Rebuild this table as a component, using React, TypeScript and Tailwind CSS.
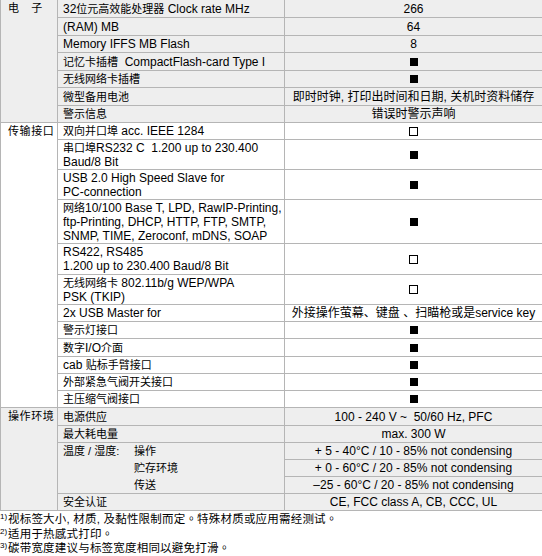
import React from "react";

const CJK_RE = /([\u2E80-\u9FFF\u3000-\u303F\uFF00-\uFFEF]+)/;

function Mix({ text, cjk }: { text: string; cjk: string }) {
  const parts = text.split(CJK_RE);
  return (
    <>
      {parts.map((p, i) =>
        i % 2 === 1 ? (
          <span key={i} className={cjk}>
            {p}
          </span>
        ) : (
          <span key={i}>{p}</span>
        )
      )}
    </>
  );
}

const Filled = () => <span className="inline-block w-[8px] h-[8px] bg-black" />;
const Empty = () => <span className="inline-block w-[9px] h-[9px] border border-black bg-white" />;

type Row = { h: string; mid: string[]; right: React.ReactNode };

const MIDCJK = "text-[11px]";
const RCJK = "text-[12px]";

function RightText({ t }: { t: string }) {
  return (
    <span className="whitespace-pre">
      <Mix text={t} cjk={RCJK} />
    </span>
  );
}

const sec1: Row[] = [
  { h: "h-[18px]", mid: ["32位元高效能处理器 Clock rate MHz"], right: <RightText t="266" /> },
  { h: "h-[18px]", mid: ["(RAM) MB"], right: <RightText t="64" /> },
  { h: "h-[17px]", mid: ["Memory IFFS MB Flash"], right: <RightText t="8" /> },
  { h: "h-[18px]", mid: ["记忆卡插槽  CompactFlash-card Type I"], right: <Filled /> },
  { h: "h-[17px]", mid: ["无线网络卡插槽"], right: <Filled /> },
  { h: "h-[18px]", mid: ["微型备用电池"], right: <RightText t="即时时钟, 打印出时间和日期, 关机时资料储存" /> },
  { h: "h-[17px]", mid: ["警示信息"], right: <RightText t="错误时警示声响" /> },
];

const sec2: Row[] = [
  { h: "h-[17px]", mid: ["双向并口埠 acc. IEEE 1284"], right: <Empty /> },
  { h: "h-[30px]", mid: ["串口埠RS232 C  1.200 up to 230.400", "Baud/8 Bit"], right: <Filled /> },
  { h: "h-[30px]", mid: ["USB 2.0 High Speed Slave for", "PC-connection"], right: <Filled /> },
  {
    h: "h-[44px]",
    mid: [
      "网络10/100 Base T, LPD, RawIP-Printing,",
      "ftp-Printing, DHCP, HTTP, FTP, SMTP,",
      "SNMP, TIME, Zeroconf, mDNS, SOAP",
    ],
    right: <Filled />,
  },
  { h: "h-[31px]", mid: ["RS422, RS485", "1.200 up to 230.400 Baud/8 Bit"], right: <Empty /> },
  { h: "h-[30px]", mid: ["无线网络卡 802.11b/g WEP/WPA", "PSK (TKIP)"], right: <Empty /> },
  { h: "h-[17px]", mid: ["2x USB Master for"], right: <RightText t="外接操作萤幕、键盘 、扫瞄枪或是service key" /> },
  { h: "h-[17px]", mid: ["警示灯接口"], right: <Filled /> },
  { h: "h-[18px]", mid: ["数字I/O介面"], right: <Filled /> },
  { h: "h-[17px]", mid: ["cab 贴标手臂接口"], right: <Filled /> },
  { h: "h-[17px]", mid: ["外部紧急气阀开关接口"], right: <Filled /> },
  { h: "h-[17px]", mid: ["主压缩气阀接口"], right: <Filled /> },
];

function RowView({ r }: { r: Row }) {
  return (
    <div className={`flex border-b border-[#b5b5b5] ${r.h}`}>
      <div className="w-[227px] shrink-0 border-r border-[#b5b5b5] pl-[5px] flex flex-col justify-center leading-[14px] whitespace-pre">
        {r.mid.map((m, i) => (
          <div key={i}>
            <Mix text={m} cjk={MIDCJK} />
          </div>
        ))}
      </div>
      <div className="flex-1 flex items-center justify-center">{r.right}</div>
    </div>
  );
}

function Label({ t }: { t: string }) {
  return (
    <div className="w-[58px] shrink-0 border-l border-r border-b border-[#b5b5b5] pl-[7px]">
      <div className="h-[17px] flex items-center text-[11px] tracking-[0.6px] whitespace-pre">{t}</div>
    </div>
  );
}

export default function App() {
  return (
    <div className="w-[542px] h-[556px] bg-white text-black text-[12px] font-['Liberation_Sans','Noto_Sans_CJK_SC',sans-serif] overflow-hidden">
      <div className="flex bg-[#eeeeee]">
        <Label t={"电\u3000子"} />
        <div className="flex-1 flex flex-col">
          {sec1.map((r, i) => (
            <RowView key={i} r={r} />
          ))}
        </div>
      </div>
      <div className="flex bg-white">
        <Label t="传输接口" />
        <div className="flex-1 flex flex-col">
          {sec2.map((r, i) => (
            <RowView key={i} r={r} />
          ))}
        </div>
      </div>
      <div className="flex bg-[#eeeeee]">
        <Label t="操作环境" />
        <div className="flex-1 flex flex-col">
          <RowView r={{ h: "h-[18px]", mid: ["电源供应"], right: <RightText t="100 - 240 V ~  50/60 Hz, PFC" /> }} />
          <RowView r={{ h: "h-[17px]", mid: ["最大耗电量"], right: <RightText t="max. 300 W" /> }} />
          <div className="flex border-b border-[#b5b5b5] h-[51px]">
            <div className="w-[227px] shrink-0 border-r border-[#b5b5b5] pl-[5px] grid grid-cols-[71px_1fr] grid-rows-[17px_17px_16px] items-center text-[11px] whitespace-pre">
              <div>温度 / 湿度:</div>
              <div>操作</div>
              <div />
              <div>贮存环境</div>
              <div />
              <div>传送</div>
            </div>
            <div className="flex-1 flex flex-col">
              <div className="h-[17px] border-b border-[#b5b5b5] flex items-center justify-center">
                + 5 - 40°C / 10 - 85% not condensing
              </div>
              <div className="h-[17px] border-b border-[#b5b5b5] flex items-center justify-center">
                + 0 - 60°C / 20 - 85% not condensing
              </div>
              <div className="h-[16px] flex items-center justify-center">–25 - 60°C / 20 - 85% not condensing</div>
            </div>
          </div>
          <RowView r={{ h: "h-[17px]", mid: ["安全认证"], right: <RightText t="CE, FCC class A, CB, CCC, UL" /> }} />
        </div>
      </div>
      <div className="pt-px font-['Liberation_Sans','Noto_Sans_CJK_TC',sans-serif] text-[11.5px] tracking-[0.2px] leading-[14.5px] whitespace-pre">
        <div>
          <span className="inline-block align-top text-[8px] leading-[9px] w-[8px] tracking-normal">1)</span>
          视标签大小, 材质, 及黏性限制而定。特殊材质或应用需经测试。
        </div>
        <div>
          <span className="inline-block align-top text-[8px] leading-[9px] w-[8px] tracking-normal">2)</span>
          适用于热感式打印。
        </div>
        <div>
          <span className="inline-block align-top text-[8px] leading-[9px] w-[8px] tracking-normal">3)</span>
          碳带宽度建议与标签宽度相同以避免打滑。
        </div>
      </div>
    </div>
  );
}
